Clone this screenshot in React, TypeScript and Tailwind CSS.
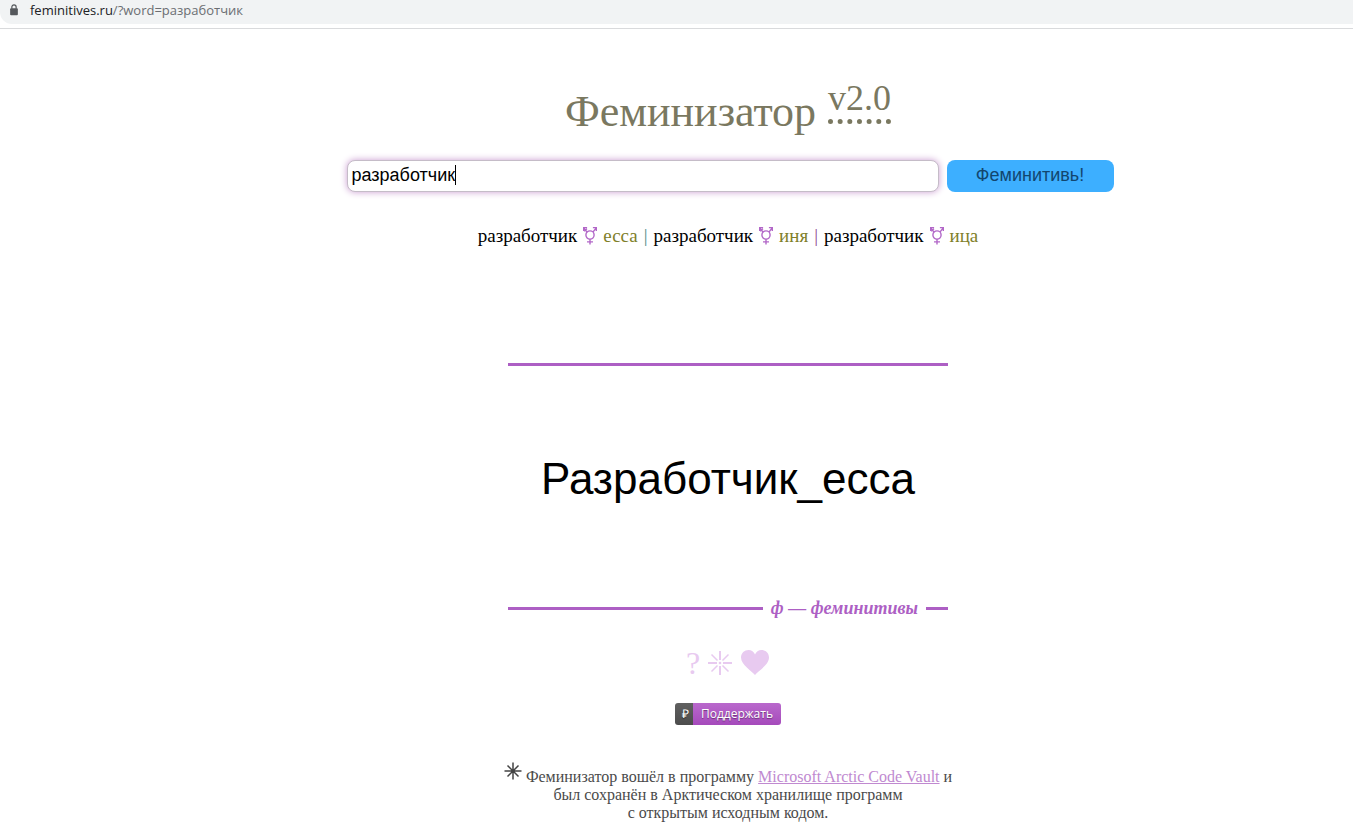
import { useState } from 'react'

const variants = [
    { ending: 'есса', divider: 'text-[#4f8f86]' },
    { ending: 'иня', divider: 'text-[#8f4a8f]' },
    { ending: 'ица', divider: '' },
]

function GenderIcon() {
    return (
        <svg viewBox="0 0 14 20" className="h-5 w-[14px]" fill="none" stroke="#b267c8" strokeWidth="1.4" aria-hidden="true">
            <circle cx="7" cy="9" r="4.100" />
            <path d="M7 13.100V18.500M4 15.900h6M9.900 6.100L13 2.200M9.900 1.600h3.500v3.500M4.100 6.100L1 2.200M.7 5.100V1.600h3.400M1.200 5.300l2.700-2.500" />
        </svg>
    )
}

function AddressBar() {
    return (
        <header className="border-b border-[#d9dadc] pb-1">
            <div className="flex h-6 items-start rounded-bl-xl bg-[#f1f3f4] pl-2 font-['Open_Sans',sans-serif] text-[13px] leading-5 text-[#6b6e72]">
                <svg viewBox="0 0 12 14" className="mt-1 h-3 w-3" aria-hidden="true">
                    <rect x="1.500" y="5" width="9" height="8" rx="1" fill="#55585c" />
                    <path d="M3.500 5.500V3.500a2.500 2.500 0 0 1 5 0v2" fill="none" stroke="#55585c" strokeWidth="1.4" />
                </svg>
                <p className="ml-[10px]">
                    <span className="text-[#202124]">feminitives.ru</span>/?word=разработчик
                </p>
            </div>
        </header>
    )
}

function SearchForm() {
    const [word, setWord] = useState('разработчик')
    const [touched, setTouched] = useState(false)

    return (
        <form
            className="mt-4 ml-1 flex w-full max-w-[767px] gap-2 font-['Liberation_Sans',sans-serif] text-lg"
            onSubmit={(e) => e.preventDefault()}
        >
            <div className="relative min-w-0 flex-1">
                <input
                    type="text"
                    aria-label="Слово"
                    value={word}
                    onChange={(e) => {
                        setWord(e.target.value)
                        setTouched(true)
                    }}
                    className="h-8 w-full rounded-lg border border-[#c5bcc8] bg-white px-1 pb-[2px] text-black shadow-[0_0_7px_#c99bd0] outline-none"
                />
                {!touched && <span className="absolute top-[5px] left-[108px] h-5 w-px bg-black" />}
            </div>
            <button type="submit" className="h-8 w-[167px] rounded-lg bg-[#3dafff] pb-[2px] text-[#12466f]">
                Феминитивь!
            </button>
        </form>
    )
}

export default function App() {
    return (
        <div className="min-h-screen bg-white font-['Liberation_Serif',serif]">
            <AddressBar />
            <main className="flex flex-col items-center pl-[103px]">
                <h1 className="mt-[51px] flex items-start gap-3 text-[44px] leading-[64px] text-[#7a7860]">
                    Феминизатор
                    <span className="border-b-5 border-dotted border-[#7a7860] pb-[3px] text-4xl leading-9">v2.0</span>
                </h1>

                <SearchForm />

                <p className="mt-8 flex h-6 items-center gap-1.5 text-[19px] text-black">
                    {variants.map((v, i) => (
                        <span key={v.ending} className="flex items-center gap-1.5">
                            разработчик
                            <GenderIcon />
                            <a href="#" className="text-[#7f7f2a]">{v.ending}</a>
                            {i < variants.length - 1 && <span className={v.divider}>|</span>}
                        </span>
                    ))}
                </p>

                <section className="mt-[115px] w-full max-w-[440px]">
                    <div className="h-[3px] bg-[#ad5fc4]" />
                    <p className="pt-[86px] pb-[88px] text-center font-['Liberation_Sans',sans-serif] text-[44px] leading-[54px] whitespace-nowrap text-black">
                        Разработчик_есса
                    </p>
                    <div className="flex items-center gap-2 text-lg font-bold text-[#ad5fc4] italic">
                        <span className="h-[3px] flex-1 bg-[#ad5fc4]" />
                        ф — феминитивы
                        <span className="h-[3px] w-[22px] bg-[#ad5fc4]" />
                    </div>
                </section>

                <nav className="mt-[21px] flex h-10 items-center gap-2 text-[#e8caf0]">
                    <a href="#" className="text-[32px] leading-10">?</a>
                    <a href="#" aria-label="Хранилище">
                        <svg viewBox="0 0 24 24" className="size-6" fill="none" stroke="currentColor" strokeWidth="2" aria-hidden="true">
                            <path d="M12 0v9M12 15v9M0 12h9M15 12h9" />
                            <path strokeWidth="1.500" d="M3.500 3.500l6 6M14.500 14.500l6 6M20.500 3.500l-6 6M9.500 14.500l-6 6" />
                            <circle cx="12" cy="12" r="1.300" fill="currentColor" stroke="none" />
                        </svg>
                    </a>
                    <a href="#" aria-label="Нравится">
                        <svg viewBox="0 0 30 26" className="h-[26px] w-[30px]" fill="currentColor" aria-hidden="true">
                            <path d="M15 25C12 21 1 15 1 7.500C1 3 4.500 0 8.500 0C11.500 0 14 1.800 15 4.500C16 1.800 18.500 0 21.500 0C25.500 0 29 3 29 7.500C29 15 18 21 15 25Z" />
                        </svg>
                    </a>
                </nav>

                <a
                    href="#"
                    className="mt-5 flex h-[22px] overflow-hidden rounded-[3px] font-['Open_Sans',sans-serif] text-xs leading-[22px] font-medium text-white [text-shadow:0_1px_1px_#0006]"
                >
                    <span className="w-[18px] bg-linear-to-b from-[#606060] to-[#4c4c4c] pl-[2px] text-center">₽</span>
                    <span className="w-[88px] bg-linear-to-b from-[#b968cc] to-[#a54abb] text-center">Поддержать</span>
                </a>

                <p className="mt-[37px] text-center text-base leading-[18px] text-[#4a4a4a]">
                    <svg viewBox="0 0 18 18" className="mr-1 inline size-[18px] align-[2px]" fill="none" stroke="#444" strokeWidth="1.500" aria-hidden="true">
                        <path d="M9 .5v17M.5 9h17M3.500 3.500l11 11M14.500 3.500l-11 11" />
                    </svg>
                    Феминизатор вошёл в программу{' '}
                    <a href="#" className="text-[#c089d0] underline">Microsoft Arctic Code Vault</a> и
                    <br />
                    был сохранён в Арктическом хранилище программ
                    <br />
                    с открытым исходным кодом.
                </p>
            </main>
        </div>
    )
}
